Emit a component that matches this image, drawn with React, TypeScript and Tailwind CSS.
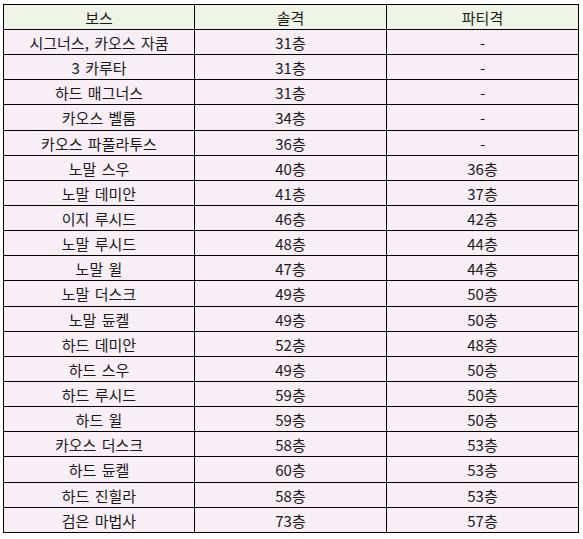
const rows: [string, string, string][] = [
  ["시그너스, 카오스 자쿰", "31층", "-"],
  ["3 카루타", "31층", "-"],
  ["하드 매그너스", "31층", "-"],
  ["카오스 벨룸", "34층", "-"],
  ["카오스 파풀라투스", "36층", "-"],
  ["노말 스우", "40층", "36층"],
  ["노말 데미안", "41층", "37층"],
  ["이지 루시드", "46층", "42층"],
  ["노말 루시드", "48층", "44층"],
  ["노말 윌", "47층", "44층"],
  ["노말 더스크", "49층", "50층"],
  ["노말 듄켈", "49층", "50층"],
  ["하드 데미안", "52층", "48층"],
  ["하드 스우", "49층", "50층"],
  ["하드 루시드", "59층", "50층"],
  ["하드 윌", "59층", "50층"],
  ["카오스 더스크", "58층", "53층"],
  ["하드 듄켈", "60층", "53층"],
  ["하드 진힐라", "58층", "53층"],
  ["검은 마법사", "73층", "57층"],
];

export default function App() {
  return (
    <div className="w-[583px] h-[539px] bg-white pt-[4px] pl-[3px] font-['Noto_Sans_CJK_KR','Noto_Sans',sans-serif] text-[15px] [word-spacing:2px] text-[#1a1a1a]">
      <table className="border-collapse table-fixed w-[575px]">
        <colgroup>
          <col className="w-[191px]" />
          <col className="w-[192px]" />
          <col className="w-[192px]" />
        </colgroup>
        <thead>
          <tr className="h-[25px] bg-[#eef5e6]">
            <th className="border border-black font-normal p-0 leading-none">보스</th>
            <th className="border border-black font-normal p-0 leading-none">솔격</th>
            <th className="border border-black font-normal p-0 leading-none">파티격</th>
          </tr>
        </thead>
        <tbody>
          {rows.map((r, i) => (
            <tr key={i} className={i % 7 === 3 ? "h-[26px] bg-[#f8eef6]" : "h-[25px] bg-[#f8eef6]"}>
              {r.map((c, j) => (
                <td key={j} className="border border-black text-center p-0 leading-none">
                  {c}
                </td>
              ))}
            </tr>
          ))}
        </tbody>
      </table>
    </div>
  );
}
